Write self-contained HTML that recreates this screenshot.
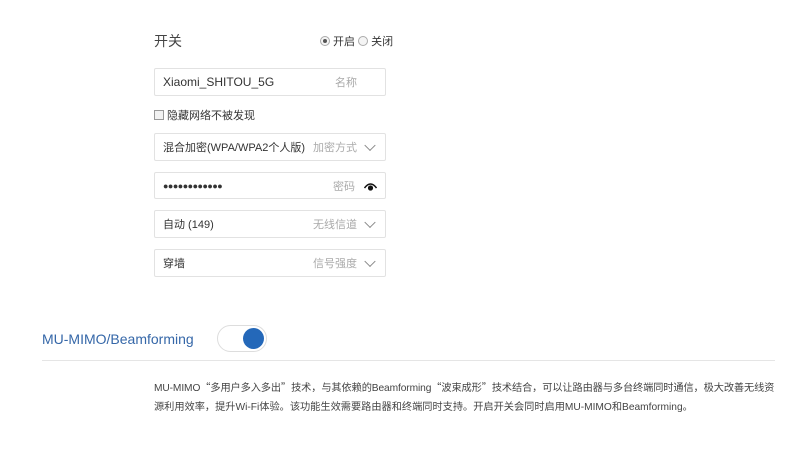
<!DOCTYPE html><html><head><meta charset="utf-8"><style>
body{margin:0;width:800px;height:450px;background:#fff;font-family:"Liberation Sans","Noto Sans CJK SC",sans-serif;color:#333;position:relative;overflow:hidden}
.a{position:absolute;white-space:nowrap}
.box{position:absolute;left:154px;width:232px;border:1px solid #e2e2e2;border-radius:2px;font-size:11px;box-sizing:border-box}
.box .l{position:absolute;left:8px;top:50%;transform:translateY(-50%)}
.box .r{position:absolute;right:28px;top:50%;transform:translateY(-50%);color:#aaa}
.chev{position:absolute;right:11px;top:50%;width:7px;height:7px;border-right:1px solid #888;border-bottom:1px solid #888;transform:translateY(-70%) rotate(45deg)}
.rad{display:inline-block;width:8px;height:8px;border:1px solid #aaa;border-radius:50%;vertical-align:-1px;position:relative;background:#f4f4f4}
.q{font-family:"Noto Sans CJK SC",sans-serif}
</style></head><body>
<div class="a" style="left:154px;top:31px;font-size:14px;color:#444">开关</div>
<div class="a" style="left:320px;top:33px;font-size:11px"><span class="rad"><span style="position:absolute;left:2px;top:2px;width:4px;height:4px;border-radius:50%;background:#555"></span></span> 开启<span class="rad" style="margin-left:3px"></span> 关闭</div>
<div class="box" style="top:68px;height:28px"><span class="l" style="font-size:12px">Xiaomi_SHITOU_5G</span><span class="r">名称</span></div>
<div class="a" style="left:154px;top:107px;font-size:11px"><span style="display:inline-block;width:8px;height:8px;border:1px solid #999;background:#f2f2f2;vertical-align:-1px"></span> 隐藏网络不被发现</div>
<div class="box" style="top:133px;height:28px"><span class="l">混合加密(WPA/WPA2个人版)</span><span class="r">加密方式</span><span class="chev"></span></div>
<div class="box" style="top:172px;height:27px"><span class="l" style="font-size:9px;letter-spacing:-0.5px">●●●●●●●●●●●●</span><span class="r" style="right:30px">密码</span>
<svg style="position:absolute;right:8px;top:9px" width="13" height="9" viewBox="0 0 13 9"><path d="M0.5 6 Q6.5 -2 12.5 6" fill="none" stroke="#111" stroke-width="1.5"/><circle cx="6.5" cy="6" r="2.6" fill="#111"/></svg></div>
<div class="box" style="top:210px;height:28px"><span class="l">自动 (149)</span><span class="r">无线信道</span><span class="chev"></span></div>
<div class="box" style="top:249px;height:28px"><span class="l">穿墙</span><span class="r">信号强度</span><span class="chev"></span></div>
<div class="a" style="left:42px;top:331px;font-size:14px;color:#3567a8">MU-MIMO/Beamforming</div>
<div class="a" style="left:217px;top:325px;width:50px;height:27px;border:1px solid #ddd;border-radius:14px;box-sizing:border-box"><div style="position:absolute;right:2px;top:2px;width:21px;height:21px;border-radius:50%;background:#2468b9"></div></div>
<div class="a" style="left:42px;top:360px;width:733px;height:1px;background:#e5e5e5"></div>
<div class="a" style="left:154px;top:377px;font-size:10.2px;line-height:19px;color:#444"><span style="letter-spacing:-0.1px">MU-MIMO<span class="q">“</span>多用户多入多出<span class="q">”</span>技术，与其依赖的Beamforming<span class="q">“</span>波束成形<span class="q">”</span>技术结合，可以让路由器与多台终端同时通信，极大改善无线资</span><br>源利用效率，提升Wi-Fi体验。该功能生效需要路由器和终端同时支持。开启开关会同时启用MU-MIMO和Beamforming。</div>
</body></html>
